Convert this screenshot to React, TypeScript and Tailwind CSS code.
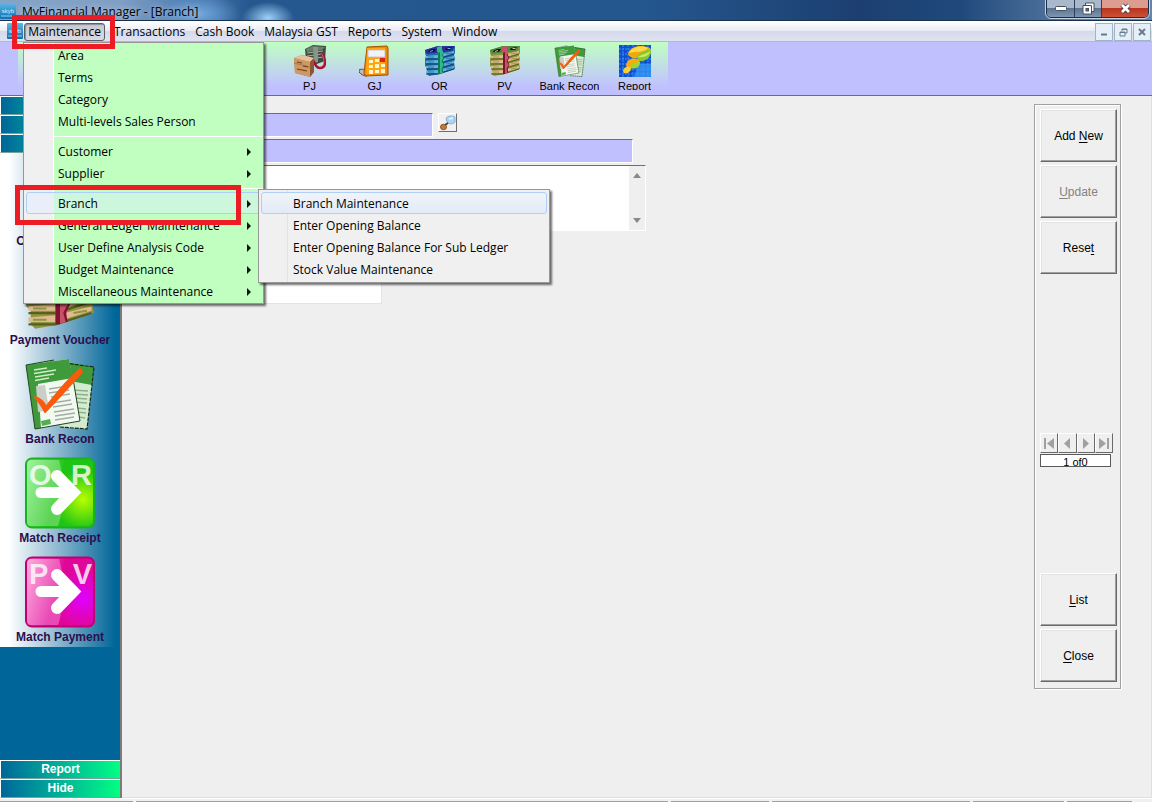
import React from "react";

type MoneyColors = { dark: string; mid: string; light: string; top: string; band: string; bandDark: string };

const BLUE_MONEY: MoneyColors = {
  dark: "#12406f",
  mid: "#1f6fa8",
  light: "#63b4da",
  top: "#2a2f9c",
  band: "#35b98a",
  bandDark: "#0d7a58",
};

const GREEN_MONEY: MoneyColors = {
  dark: "#57601f",
  mid: "#8f9440",
  light: "#e0b98e",
  top: "#4e8a3a",
  band: "#c8506a",
  bandDark: "#7d1430",
};

function MoneyIcon({ colors, className }: { colors: MoneyColors; className: string }) {
  const layers = [0, 1, 2, 3];
  return (
    <svg viewBox="0 0 32 32" className={className} aria-hidden="true">
      <path d="M1 5 L14 1 L31 1 L31 8 L30 10 L31 14 L30 17 L31 24 L16 29 L5 31 L3 29 L3 23 L1 21 L1 14 L2 11 L1 8 Z" fill={colors.mid} />
      <path d="M1 5 L14 1 L31 1 L28 6 L3 9 Z" fill={colors.top} />
      <path d="M4 6 L8 4 L12 4 L10 7 L5 7 Z" fill="#101030" />
      <path d="M22 3 L28 2 L26 5 L21 5 Z" fill="#101030" />
      <path d="M6 6 L9 5 L9 6 L6 7 Z" fill={colors.light} />
      <path d="M24 3 L27 3 L26 4 L23 4 Z" fill={colors.light} />
      {layers.map((n) => (
        <g key={n} transform={`translate(0 ${n * 5})`}>
          <path d="M2 11 L14 10 L30 6 L30 8 L14 13 L2 13 Z" fill={colors.light} />
          <path d="M2 14 L14 14 L30 9" stroke={colors.dark} strokeWidth="1" fill="none" />
          <path d="M4 12 L10 12 M22 9 L28 8" stroke={colors.mid} strokeWidth="0.8" />
        </g>
      ))}
      <path d="M13 2 L18 1 L18 4 L19 7 L19 28 L14 29 L14 8 L13 6 Z" fill={colors.band} />
      <path d="M14 8 L16 7 L16 29 L14 29 Z" fill={colors.bandDark} />
      <path d="M18 9 L20 13 L18 16 L20 20 L18 24 L19 28" fill="none" stroke={colors.bandDark} strokeWidth="1" />
    </svg>
  );
}

function BankReconIcon({ className }: { className: string }) {
  return (
    <svg viewBox="0 0 72 72" className={className} aria-hidden="true">
      <path d="M38 3 L70 9 L63 71 L36 69 Z" fill="#d3ecd0" />
      <path d="M38 3 L70 9 L68 27 L40 22 Z" fill="#3f9a3c" />
      <path d="M26 3 L70 9 L63 71 L36 69" fill="none" stroke="#162b14" strokeWidth="1.200" strokeDasharray="4 1" />
      <path d="M48 32 L64 33 M48 36 L64 37 M50 40 L63 41 M50 44 L63 45 M53 50 L62 51 M53 54 L62 55 M55 59 L61 60" stroke="#8fb08c" strokeWidth="1.5" />
      <path d="M2 7 L45 1 L56 63 L11 71 Z" fill="#f2f9f0" />
      <path d="M2 7 L45 1 L49 20 L14 26 L17 70 L11 71 Z" fill="#3f9a3c" />
      <path d="M49 20 L56 63 L11 71 L2 7 L30 2" fill="none" stroke="#24451f" strokeWidth="1" />
      <path d="M10 12 L23 10 M10 15.500 L32 12 M11 19 L30 16 M11 22.500 L25 20" stroke="#cdeec6" strokeWidth="1.300" />
      <path d="M12 28 L21 27 L25 52 L14 54 Z" fill="#c9cfc6" />
      <path d="M25 31 L44 28 M25 35 L45 32 M27 39 L46 36 M28 45 L47 42 M29 49 L48 46 M30 54 L50 51 M31 58 L51 55 M31 62 L50 59" stroke="#a4ada2" strokeWidth="1.300" />
      <path d="M17 63 L26 61 L27 66 L18 68 Z" fill="#55ad50" />
      <path d="M11 39 C17 41 20 44 22 49 C33 35 42 23 56 11 L58 14 C46 27 34 41 21 54 C19 49 16 45 11 39 Z" fill="#fa5a0a" stroke="#fa5a0a" strokeWidth="2" strokeLinejoin="round" />
    </svg>
  );
}

function PurchaseIcon({ className }: { className: string }) {
  return (
    <svg viewBox="0 0 32 32" className={className} aria-hidden="true">
      <path d="M11 4 L19 0 L32 1 L31 16 L20 20 L12 15 Z" fill="#3f4a40" />
      <path d="M12 4 L19 1 L31 2 L28 5 L13 7 Z" fill="#6d7f6c" />
      <path d="M13 8 L29 6 M13 11 L29 9 M14 14 L30 12" stroke="#9fb09a" strokeWidth="1" />
      <path d="M19 2 L24 2 L24 17 L20 18 Z" fill="#87968b" />
      <path d="M27 8 C32 13 33 23 26 23 C22 23 21 19 19 15" fill="none" stroke="#a3122f" strokeWidth="2.500" />
      <path d="M27 8 C31 13 31 21 26 22" fill="none" stroke="#e56a80" strokeWidth="0.800" />
      <path d="M0 13 L8 10 L20 13 L20 27 L16 32 L1 28 Z" fill="#b47b4c" />
      <path d="M0 13 L8 10 L20 13 L16 17 Z" fill="#e8c297" />
      <path d="M0 13 L16 17 L16 32 L1 28 Z" fill="#cd9866" />
      <path d="M0 18 L16 22" stroke="#a56e40" strokeWidth="0.800" />
      <path d="M3 17 L8 18 M9 21 L14 22 M3 24 L13 26" stroke="#6e3d1c" strokeWidth="1.200" />
      <path d="M16 17 L20 13 L20 27 L16 32 Z" fill="#8f5730" />
    </svg>
  );
}

function CalculatorIcon({ className }: { className: string }) {
  return (
    <svg viewBox="0 0 32 32" className={className} aria-hidden="true">
      <path d="M0 25 C3 23 6 25 7 27 L8 31 C4 31 2 29 0 27 Z" fill="#b9bcc0" stroke="#44474b" strokeWidth="1" />
      <path d="M8 2 L28 1 L29 3 L29 30 L6 31 L5 28 Z" fill="#f08a00" stroke="#a65300" strokeWidth="1" />
      <path d="M8 3 L26 3 L26 29 L7 29 Z" fill="#ffa414" />
      <rect x="9" y="5" width="17" height="7" fill="#f2f3f6" stroke="#b8b8c0" strokeWidth="0.700" />
      <path d="M10 15h4v3h-4zM16 14h4v3h-4zM10 20h4v3h-4zM16 19h4v4h-4zM22 19h4v3h-4zM10 25h4v4h-4zM16 25h4v3h-4zM22 24h4v4h-4z" fill="#fff6c8" />
      <rect x="21" y="13" width="5" height="4" fill="#e0201a" />
    </svg>
  );
}

function ReportIcon({ className }: { className: string }) {
  return (
    <svg viewBox="0 0 32 32" className={className} aria-hidden="true">
      <rect width="32" height="32" fill="#0c4fd0" />
      <path d="M0 4h32M0 9h32M0 14h32M0 19h32M0 24h32M0 29h32M4 0v32M9 0v32M14 0v32M19 0v32M24 0v32M29 0v32" stroke="#3c8cf4" strokeWidth="1" strokeDasharray="2 1" />
      <path d="M19 19h13v13h-17z" fill="#3aa0f8" opacity="0.700" />
      <path d="M9 9 C11 1 22 -1 31 3 C33 11 24 14 19 13 C14 14 10 12 9 9 Z" fill="#eea90c" />
      <path d="M10 8 C13 2 22 0 29 3 C25 8 17 6 10 8Z" fill="#ffd94a" />
      <path d="M18 12 C21 6 28 6 32 4 C33 12 27 17 19 16 Z" fill="#86c92c" />
      <path d="M19 12 C23 9 28 9 31 6 C31 10 25 13 19 12Z" fill="#c9ec62" />
      <path d="M7 20 C8 13 16 12 20 15 C22 20 14 24 8 23 Z" fill="#f2ad0f" />
      <path d="M12 21 C15 17 19 18 21 16 C22 21 17 25 12 23 Z" fill="#9cd634" />
      <path d="M4 26 C5 21 10 21 12 23 C12 27 8 29 5 28 Z" fill="#f9cf32" />
    </svg>
  );
}

type TileProps = { id: string; left: string; right: string; border: string; from: string; to: string; glow: string };

function ArrowTile({ id, left, right, border, from, to, glow }: TileProps) {
  return (
    <svg viewBox="0 0 72 72" className="size-[72px]" aria-hidden="true">
      <defs>
        <linearGradient id={`${id}-base`} x1="0" y1="0" x2="1" y2="0.3">
          <stop offset="0" stopColor={from} />
          <stop offset="0.55" stopColor={to} />
          <stop offset="1" stopColor={to} />
        </linearGradient>
        <radialGradient id={`${id}-glow`} cx="0.85" cy="0.6" r="0.45">
          <stop offset="0" stopColor={glow} />
          <stop offset="1" stopColor={glow} stopOpacity="0" />
        </radialGradient>
      </defs>
      <rect x="2" y="1.500" width="68" height="69" rx="6" fill={`url(#${id}-base)`} stroke={border} strokeWidth="2" />
      <rect x="3" y="3" width="66" height="66" rx="5" fill={`url(#${id}-glow)`} />
      <path d="M6 3 H35 C40 20 42 45 34 69 H6 Q3 69 3 66 V6 Q3 3 6 3Z" fill="#ffffff" opacity="0.28" />
      <text x="5" y="28" fontFamily="Liberation Sans, sans-serif" fontWeight="bold" fontSize="29" fill="#ffffff" fillOpacity="0.8">{left}</text>
      <text x="68" y="28" textAnchor="end" fontFamily="Liberation Sans, sans-serif" fontWeight="bold" fontSize="29" fill="#ffffff" fillOpacity="0.8">{right}</text>
      <path d="M17 35.500 H48" fill="none" stroke="#ffffff" strokeWidth="11" strokeLinecap="round" />
      <path d="M33 19 L49 35.500 L33 52" fill="none" stroke="#ffffff" strokeWidth="12" strokeLinecap="round" strokeLinejoin="miter" />
    </svg>
  );
}

function AppLogo({ className }: { className: string }) {
  return (
    <svg viewBox="0 0 16 16" className={className} aria-hidden="true">
      <defs>
        <linearGradient id="app-logo" x1="0" y1="0" x2="0" y2="1">
          <stop offset="0" stopColor="#5cb8e4" />
          <stop offset="1" stopColor="#0f6fb4" />
        </linearGradient>
      </defs>
      <rect width="16" height="16" rx="1" fill="url(#app-logo)" />
      <text x="8" y="10" textAnchor="middle" fontFamily="Liberation Sans, sans-serif" fontSize="6" fill="#d6f0ff">skyb</text>
      <path d="M1 13 H15" stroke="#8fd0f0" strokeWidth="1" />
    </svg>
  );
}

function Chevron() {
  return (
    <svg viewBox="0 0 4 8" className="h-2 w-1" aria-hidden="true">
      <path d="M0 0 L4 4 L0 8 Z" fill="#111" />
    </svg>
  );
}

function MenuRow({ label, submenu }: { label: string; submenu?: boolean }) {
  return (
    <li>
      <button type="button" className="flex h-[22px] w-full items-center justify-between pt-0.5 pr-3 pl-[34px] text-left leading-5">
        {label}
        {submenu && <Chevron />}
      </button>
    </li>
  );
}

function Separator() {
  return (
    <li role="separator" className="flex h-2 items-center pl-[29px]">
      <span className="h-px w-full bg-white" />
    </li>
  );
}

const BRANCH_ITEMS = ["Branch Maintenance", "Enter Opening Balance", "Enter Opening Balance For Sub Ledger", "Stock Value Maintenance"];

function BranchSubmenu() {
  return (
    <ul className="absolute -top-[3px] left-[234px] z-10 w-[292px] border border-[#979797] bg-[linear-gradient(90deg,#f0f0f0_28px,#e2e3e3_28px,#e2e3e3_29px,#f0f0f0_29px)] p-0.5 shadow-[2px_2px_2px_0px_#00000090]">
      {BRANCH_ITEMS.map((label, i) => (
        <li key={label}>
          <button
            type="button"
            className={
              i === 0
                ? "flex h-[22px] w-full items-center rounded-[3px] border border-[#aecff7] bg-linear-to-b from-[#f1f4f9] to-[#e3eaf5] pt-0.5 pl-[31px]"
                : "flex h-[22px] w-full items-center pt-0.5 pl-8"
            }
          >
            {label}
          </button>
        </li>
      ))}
    </ul>
  );
}

function MaintenanceMenu() {
  return (
    <ul className="absolute top-5 -left-px z-20 w-[241px] border border-[#979797] bg-[linear-gradient(90deg,#f0f0f0_29px,#ffffff_29px,#ffffff_30px,#c0ffc0_30px)] py-px text-xs shadow-[2px_2px_2px_0px_#00000090]">
      <MenuRow label="Area" />
      <MenuRow label="Terms" />
      <MenuRow label="Category" />
      <MenuRow label="Multi-levels Sales Person" />
      <Separator />
      <MenuRow label="Customer" submenu />
      <MenuRow label="Supplier" submenu />
      <Separator />
      <li className="relative">
        <button
          type="button"
          aria-expanded="true"
          className="ml-0.5 flex h-[22px] w-[237px] items-center justify-between rounded-[3px] border border-[#aecff7] bg-[linear-gradient(90deg,#e9eef8_27px,#ccf7dc_27px)] pt-0.5 pr-[11px] pl-[31px]"
        >
          Branch
          <Chevron />
        </button>
        <BranchSubmenu />
        <span className="pointer-events-none absolute -top-[7px] -left-[9px] z-30 h-10 w-[226px] border-5 border-[#ed1c24]" />
      </li>
      <MenuRow label="General Ledger Maintenance" submenu />
      <MenuRow label="User Define Analysis Code" submenu />
      <MenuRow label="Budget Maintenance" submenu />
      <MenuRow label="Miscellaneous Maintenance" submenu />
    </ul>
  );
}

function TitleBar() {
  return (
    <header className="relative flex h-[21px] items-start justify-between overflow-hidden border-b border-[#16304f] bg-[radial-gradient(ellipse_26px_16px_at_268px_18px,#9fd0f8,#9fd0f800),radial-gradient(ellipse_40px_20px_at_200px_14px,#6fa6dc,#6fa6dc00),linear-gradient(90deg,#86a4c6_0px,#7f9fc4_120px,#4d7bb0_190px,#26588f_250px,#25578f_640px,#1c3f70_860px,#20497b_960px,#6585aa_1100px)]">
      <div className="flex items-center gap-1.5">
        <AppLogo className="size-4" />
        <h1 className="pt-0.5 text-xs leading-5 text-black [text-shadow:0_0_6px_#ffffffb0]">MyFinancial Manager - [Branch]</h1>
      </div>
      <div className="mr-[3px] flex h-[18px] overflow-hidden rounded-b-[5px] border border-t-0 border-[#1c2c44] outline outline-[#c4d2e2]">
        <button type="button" aria-label="Minimize" className="flex w-7 items-center justify-center border-r border-[#2c405c] bg-[linear-gradient(180deg,#a9b8ca_45%,#5a7290_46%,#7f96b0)]">
          <svg viewBox="0 0 12 5" className="h-[5px] w-3"><rect x="0.500" y="0.500" width="11" height="4" rx="1" fill="#fff" stroke="#45505e" /></svg>
        </button>
        <button type="button" aria-label="Restore" className="flex w-[27px] items-center justify-center border-r border-[#2c405c] bg-[linear-gradient(180deg,#a9b8ca_45%,#5a7290_46%,#7f96b0)]">
          <svg viewBox="0 0 13 13" className="size-[13px]">
            <path d="M3.500 1 H12 V9.500 H3.500 Z" fill="#fff" stroke="#45505e" />
            <path d="M1 3.500 H9.500 V12 H1 Z" fill="#fff" stroke="#45505e" />
            <rect x="4" y="6.500" width="2.500" height="2.500" fill="#5a7290" stroke="#45505e" />
          </svg>
        </button>
        <button type="button" aria-label="Close window" className="flex w-[46px] items-center justify-center bg-[linear-gradient(180deg,#dc9c90_45%,#b8321c_46%,#cc5236)]">
          <svg viewBox="0 0 13 11" className="h-[11px] w-[13px]">
            <path d="M3 2 L10 9 M10 2 L3 9" stroke="#4a3a40" strokeWidth="4.500" />
            <path d="M3 2 L10 9 M10 2 L3 9" stroke="#fff" strokeWidth="2.800" />
          </svg>
        </button>
      </div>
    </header>
  );
}

const MENUS = ["Transactions", "Cash Book", "Malaysia GST", "Reports", "System", "Window"];
const CHILD_BTN = "flex h-[18px] w-[18px] items-center justify-center border border-[#9fb4c8] bg-[#e6eff8]";

function MenuBar() {
  return (
    <nav className="flex h-[21px] items-start justify-between border-t border-b border-t-white border-b-[#b8b8c4] bg-[linear-gradient(180deg,#ffffff_0%,#e9ebf5_45%,#d5daeb_50%,#dfe3f1_100%)] text-xs">
      <div className="flex h-5 items-start pl-[7px]">
        <AppLogo className="mt-px mr-px size-4" />
        <div className="relative">
          <button type="button" aria-expanded="true" className="mt-px h-[18px] w-[81px] rounded-[3px] border border-[#5d5f68] bg-linear-to-b from-[#c8cad2] to-[#d8dae4] leading-4 shadow-[inset_1px_1px_1px_#8b8d96]">
            Maintenance
          </button>
          <MaintenanceMenu />
          <span className="pointer-events-none absolute -top-[7px] -left-3 z-30 h-[34px] w-[103px] border-5 border-[#ed1c24]" />
        </div>
        <div className="flex gap-2.5 pl-[9px]">
          {MENUS.map((m) => (
            <button key={m} type="button" className="leading-5">{m}</button>
          ))}
        </div>
      </div>
      <div className="flex gap-px pt-px pr-px">
        <button type="button" aria-label="Minimize child window" className={CHILD_BTN}>
          <svg viewBox="0 0 8 8" className="size-2"><path d="M1 6.500 H7" stroke="#667a90" strokeWidth="2" /></svg>
        </button>
        <button type="button" aria-label="Restore child window" className={CHILD_BTN}>
          <svg viewBox="0 0 9 9" className="size-[9px]"><path d="M3 3 V1 H8 V5 H6 M1 4 H6 V8 H1 Z M1 4.500 H6 M3 1.500 H8" fill="none" stroke="#667a90" /></svg>
        </button>
        <button type="button" aria-label="Close child window" className={CHILD_BTN}>
          <svg viewBox="0 0 8 8" className="size-2"><path d="M1 1 L7 7 M7 1 L1 7" stroke="#667a90" strokeWidth="2" /></svg>
        </button>
      </div>
    </nav>
  );
}

function ToolBar() {
  const tools = [
    { label: "PJ", icon: <PurchaseIcon className="size-8" /> },
    { label: "GJ", icon: <CalculatorIcon className="size-8" /> },
    { label: "OR", icon: <MoneyIcon colors={BLUE_MONEY} className="size-8" /> },
    { label: "PV", icon: <MoneyIcon colors={GREEN_MONEY} className="size-8" /> },
    { label: "Bank Recon", icon: <BankReconIcon className="size-8" /> },
    { label: "Report", icon: <ReportIcon className="size-8" /> },
  ];
  return (
    <div className="flex h-[54px] border-b border-[#6d6d78] bg-[#c0c0ff] pl-[18px]">
      <div className="flex bg-linear-to-b from-[#c0ffc0] to-[#c0c0ff] to-85% pr-px pl-[259px] font-['Liberation_Sans',Arial,sans-serif] text-[11px]">
        {tools.map((t) => (
          <button key={t.label} type="button" className="flex w-[65px] flex-col items-center pt-[3px]">
            {t.icon}
            <span className="mt-[3px] h-[10px] overflow-hidden leading-[13px] whitespace-nowrap">{t.label}</span>
          </button>
        ))}
      </div>
    </div>
  );
}

function SideItem({ label, children }: { label: string; children: React.ReactNode }) {
  return (
    <button type="button" className="flex h-[99px] w-full flex-col items-center font-bold text-[#2b0f4e]">
      {children}
      <span className="mt-px leading-[17px] whitespace-nowrap">{label}</span>
    </button>
  );
}

const SIDE_BAR_BTN =
  "h-[19px] border-t border-b border-l border-t-white border-b-[#7f9f9f] border-l-white bg-linear-to-r from-[#006699] to-[#00ff80] font-bold leading-[17px] text-white";

function SideBar() {
  return (
    <aside className="flex w-[122px] shrink-0 flex-col border-r-2 border-r-[#7b7b7b] bg-[#006699] font-['Liberation_Sans',Arial,sans-serif] text-xs">
      {["Maintenance group", "Transaction group", "Voucher group"].map((g) => (
        <button key={g} type="button" aria-label={g} className={SIDE_BAR_BTN} />
      ))}
      <div className="h-[494px] bg-[linear-gradient(90deg,#ffffff_0%,#fcfeff_8%,#8fb9d0_48%,#006699_96%)] pt-[7px]">
        <SideItem label="Official Receipt"><MoneyIcon colors={BLUE_MONEY} className="size-[72px]" /></SideItem>
        <SideItem label="Payment Voucher"><MoneyIcon colors={GREEN_MONEY} className="size-[72px]" /></SideItem>
        <SideItem label="Bank Recon"><BankReconIcon className="size-[72px]" /></SideItem>
        <SideItem label="Match Receipt">
          <ArrowTile id="receipt" left="O" right="R" border="#16b51c" from="#7ff07c" to="#1fc415" glow="#b8ff00" />
        </SideItem>
        <SideItem label="Match Payment">
          <ArrowTile id="payment" left="P" right="V" border="#c00070" from="#ff8fd0" to="#e0069a" glow="#e000ff" />
        </SideItem>
      </div>
      <div className="mt-auto flex flex-col">
        <button type="button" className={SIDE_BAR_BTN}>Report</button>
        <button type="button" className={SIDE_BAR_BTN}>Hide</button>
      </div>
    </aside>
  );
}

const SUNKEN = "border border-t-[#6f6f6f] border-l-[#6f6f6f] border-r-white border-b-white";

function BranchForm() {
  return (
    <form className="flex flex-1 flex-col items-start pt-[17px] pl-[99px]">
      <div className="flex w-full items-start gap-[5px]">
        <input aria-label="Branch code" className={`h-6 w-[212px] bg-[#c0c0ff] ${SUNKEN}`} />
        <button type="button" aria-label="Find branch" className="flex h-[19px] w-[19px] items-center justify-center border border-t-white border-r-[#6f6f6f] border-b-[#6f6f6f] border-l-white bg-[#f0f0f0]">
          <svg viewBox="0 0 16 16" className="size-4">
            <path d="M6 3 C8 1 12 0 15 2 L15 7 C12 10 9 9 7 7 Z" fill="#a9d4f4" stroke="#7fa3c8" strokeWidth="0.800" />
            <path d="M9 4 L13 3" stroke="#eef8ff" strokeWidth="1.500" />
            <path d="M8 8 L5 10" stroke="#444" strokeWidth="2" />
            <ellipse cx="3.500" cy="12" rx="3" ry="2.800" fill="#c47a34" stroke="#7c4516" strokeWidth="0.800" />
          </svg>
        </button>
      </div>
      <input aria-label="Branch name" className={`mt-0.5 h-6 w-[412px] bg-[#c0c0ff] ${SUNKEN}`} />
      <div className={`mt-0.5 flex h-[66px] w-[425px] bg-white ${SUNKEN}`}>
        <textarea aria-label="Address" className="min-w-0 flex-1 resize-none" />
        <div className="flex w-4 flex-col items-center justify-between bg-[#efefef] py-[7px]">
          <svg viewBox="0 0 8 5" className="h-[5px] w-2" aria-hidden="true"><path d="M0 5 L4 0 L8 5Z" fill="#888" /></svg>
          <svg viewBox="0 0 8 5" className="h-[5px] w-2" aria-hidden="true"><path d="M0 0 L4 5 L8 0Z" fill="#888" /></svg>
        </div>
      </div>
      <input aria-label="Contact" className="mt-[49px] h-6 w-[161px] border border-[#e3e3e3] bg-white" />
    </form>
  );
}

const ACTION = "h-[53px] w-[77px] border border-t-white border-l-white border-r-[#696969] border-b-[#696969] shadow-[inset_-1px_-1px_0_#a0a0a0,inset_1px_1px_0_#e3e3e3]";

function ActionPanel() {
  const nav = [
    { label: "First", d: "M1 0 H3 V11 H1 Z M11 0 V11 L4 5.500 Z" },
    { label: "Previous", d: "M9 0 V11 L3 5.500 Z" },
    { label: "Next", d: "M3 0 V11 L9 5.500 Z" },
    { label: "Last", d: "M9 0 H11 V11 H9 Z M1 0 V11 L8 5.500 Z" },
  ];
  return (
    <section aria-label="Record actions" className="mt-2 mr-[30px] flex w-[87px] flex-col self-start border border-[#a0a0a0] px-[5px] pt-1 pb-1.5 font-['Liberation_Sans',Arial,sans-serif] text-xs shadow-[1px_1px_0_#fff,inset_1px_1px_0_#fff]">
      <div className="flex flex-col gap-[3px]">
        <button type="button" className={ACTION}>Add <u className="underline-offset-2">N</u>ew</button>
        <button type="button" disabled className={`${ACTION} text-[#838383]`}><u className="underline-offset-2">U</u>pdate</button>
        <button type="button" className={ACTION}>Rese<u className="underline-offset-2">t</u></button>
      </div>
      <div className="mt-[159px] flex w-[73px]">
        {nav.map((n) => (
          <button key={n.label} type="button" aria-label={n.label} className="flex h-5 flex-1 items-center justify-center border border-t-white border-r-[#696969] border-b-[#696969] border-l-white">
            <svg viewBox="0 0 12 11" className="h-[11px] w-3"><path d={n.d} fill="#a0a0a0" /></svg>
          </button>
        ))}
      </div>
      <output className="mt-px block h-[13px] w-[71px] overflow-hidden border border-[#5a5a5a] bg-white text-center text-[11px] leading-[14px]">1 of0</output>
      <div className="mt-[106px] flex flex-col gap-[3px]">
        <button type="button" className={ACTION}><u className="underline-offset-2">L</u>ist</button>
        <button type="button" className={ACTION}><u className="underline-offset-2">C</u>lose</button>
      </div>
    </section>
  );
}

function StatusBar() {
  return (
    <footer className="flex h-1 items-end gap-[3px] border-t border-t-white bg-[#f0f0f0] pr-5">
      <span className="h-px w-[133px] bg-[#a0a0a0]" />
      <span className="h-px flex-1 bg-[#a0a0a0]" />
      <span className="h-px w-[98px] bg-[#a0a0a0]" />
      <span className="h-px w-[198px] bg-[#a0a0a0]" />
      <span className="h-px w-[91px] bg-[#a0a0a0]" />
      <span className="h-px w-[65px] bg-[#a0a0a0]" />
    </footer>
  );
}

export default function App() {
  return (
    <div className="flex min-h-screen flex-col bg-[#f0f0f0] font-['Open_Sans','Noto_Sans',sans-serif] text-black">
      <TitleBar />
      <MenuBar />
      <ToolBar />
      <main className="flex flex-1">
        <SideBar />
        <div className="flex flex-1 border-r border-b border-[#e0e0e0] bg-[#efefef]">
          <BranchForm />
          <ActionPanel />
        </div>
      </main>
      <StatusBar />
    </div>
  );
}
